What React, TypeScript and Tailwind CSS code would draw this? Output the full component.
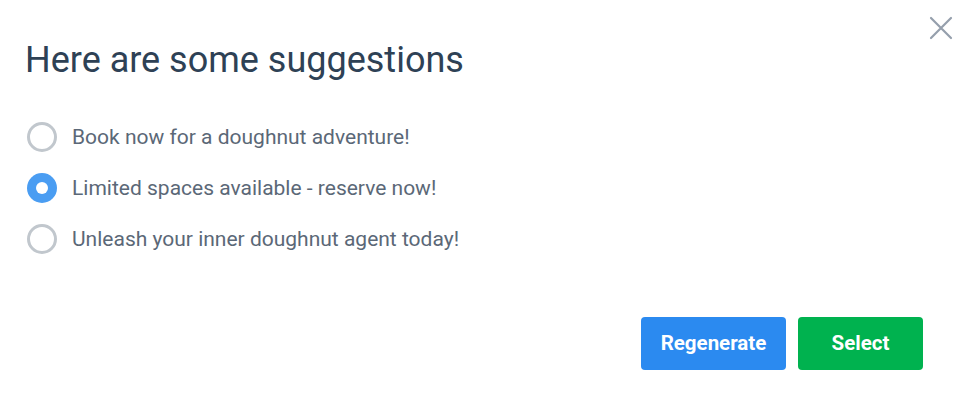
import { useState } from "react";

const sugestoes = [
  "Book now for a doughnut adventure!",
  "Limited spaces available - reserve now!",
  "Unleash your inner doughnut agent today!",
];

export default function App() {
  const [selecionada, setSelecionada] = useState(1);

  return (
    <main
      className="relative h-[394px] w-[968px] overflow-hidden bg-white"
      style={{ fontFamily: "Roboto, 'Liberation Sans', sans-serif" }}
    >
      <button
        type="button"
        aria-label="Close"
        className="absolute right-[15px] top-[16px] flex h-[24px] w-[24px] items-center justify-center text-[#959fac]"
      >
        <svg width="24" height="24" viewBox="0 0 24 24" fill="none">
          <path
            d="M2 2L22 22M22 2L2 22"
            stroke="currentColor"
            strokeWidth="2.2"
            strokeLinecap="round"
          />
        </svg>
      </button>

      <section className="flex h-full flex-col px-[25px] pt-[38px]">
        <h1 className="text-[36px] font-normal leading-[44px] text-[#2e4155]">
          Here are some suggestions
        </h1>

        <ul className="mt-[40px] flex flex-col gap-[21px] pl-[2px]">
          {sugestoes.map((texto, i) => (
            <li key={texto}>
              <label
                className="flex cursor-pointer items-center gap-[15px]"
                onClick={() => setSelecionada(i)}
              >
                <span
                  className={
                    selecionada === i
                      ? "flex h-[30px] w-[30px] items-center justify-center rounded-full bg-[#4a9df2]"
                      : "h-[30px] w-[30px] rounded-full border-[3px] border-[#c1c7cd] bg-white"
                  }
                >
                  {selecionada === i && (
                    <span className="h-[12px] w-[12px] rounded-full bg-white" />
                  )}
                </span>
                <span className="text-[21px] leading-[30px] text-[#5b6877]">
                  {texto}
                </span>
              </label>
            </li>
          ))}
        </ul>

        <div className="mt-[63px] flex justify-end gap-[12px] pr-[20px]">
          <button
            type="button"
            className="h-[53px] w-[145px] rounded-[4px] bg-[#2b8af0] text-[20.5px] font-bold text-white"
          >
            Regenerate
          </button>
          <button
            type="button"
            className="h-[53px] w-[125px] rounded-[4px] bg-[#00b24f] text-[20.5px] font-bold text-white"
          >
            Select
          </button>
        </div>
      </section>
    </main>
  );
}
